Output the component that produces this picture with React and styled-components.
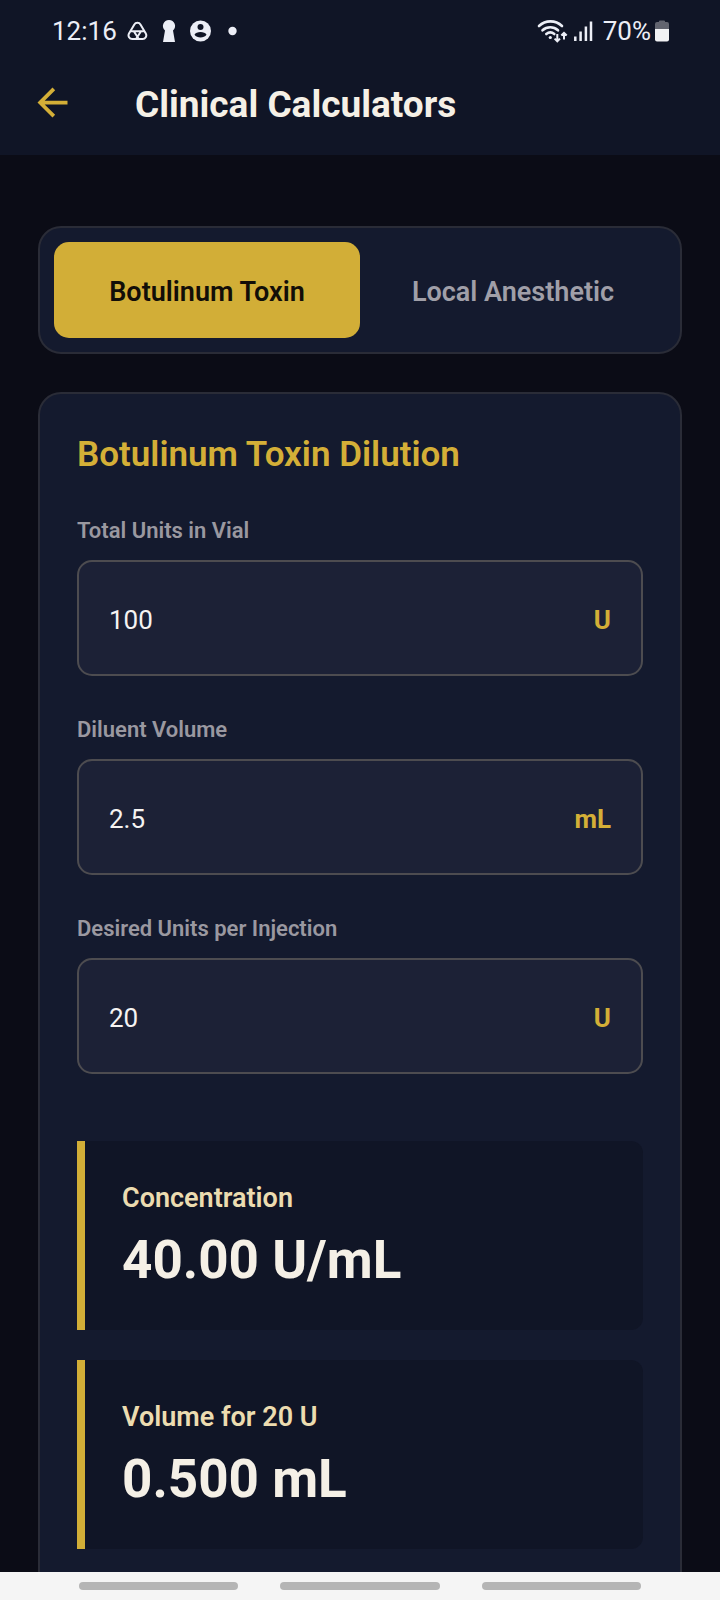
import styled, { createGlobalStyle } from 'styled-components';
import { useState } from 'react';

const GlobalStyle = createGlobalStyle`
* {
box-sizing: border-box;
}
body {
margin: 0;
background: #0b0c16;
font-family: Roboto, "Liberation Sans", sans-serif;
}
button, input {
font-family: inherit;
}
`;

const Screen = styled.div`
display: flex;
flex-direction: column;
height: 100vh;
`;

const Top = styled.header`
background: #101526;
`;

const StatusBar = styled.div`
display: flex;
justify-content: space-between;
align-items: center;
height: 62px;
padding: 0 51px 0 52px;
color: #eceef6;
font-size: 26px;
line-height: 32px;
`;

const StatusGroup = styled.div`
display: flex;
align-items: center;
gap: ${(props) => props.$gap}px;
`;

const TitleBar = styled.div`
display: flex;
align-items: center;
gap: 60px;
height: 93px;
padding: 0 30px 12px;
`;

const BackButton = styled.button`
display: flex;
padding: 0;
border: none;
background: none;
color: #d4af37;
cursor: pointer;
`;

const PageTitle = styled.h1`
margin: 0;
padding-top: 4px;
font-weight: 700;
font-size: 37px;
line-height: 44px;
color: #f5f0e6;
`;

const Content = styled.main`
flex: 1;
min-height: 0;
overflow-y: auto;
scrollbar-width: none;
padding: 71px 38px 38px;
`;

const Tabs = styled.div`
display: flex;
margin-bottom: 38px;
padding: 14px;
background: #141a2e;
border: 2px solid #2a2c37;
border-radius: 23px;
`;

const Tab = styled.button`
flex: 1;
height: 96px;
padding: 4px 0 0;
border: none;
border-radius: 15px;
background: ${(props) => (props.$active ? '#d2ae37' : 'transparent')};
color: ${(props) => (props.$active ? '#120e08' : '#a09fa8')};
font-weight: 600;
font-size: 27px;
line-height: 32px;
cursor: pointer;
`;

const Card = styled.section`
padding: 36px 37px 72px;
background: #141a2e;
border: 2px solid #2a2c37;
border-radius: 23px;
`;

const CardTitle = styled.h2`
margin: 0 0 36px;
font-weight: 600;
font-size: 35px;
line-height: 50px;
color: #d4af37;
`;

const Field = styled.div`
margin-bottom: 39px;
`;

const Label = styled.label`
display: block;
margin-bottom: 14px;
font-weight: 600;
font-size: 22px;
line-height: 30px;
color: #9a98a0;
`;

const InputBox = styled.div`
display: flex;
align-items: center;
height: 116px;
padding: 4px 30px 0;
background: #1c2136;
border: 2px solid #4d4c50;
border-radius: 15px;
`;

const Input = styled.input`
flex: 1;
min-width: 0;
padding: 0;
border: none;
outline: none;
background: none;
font-size: 26px;
line-height: 32px;
color: #f5f3f2;
`;

const Unit = styled.span`
font-weight: 700;
font-size: 26px;
line-height: 32px;
color: #d4af37;
`;

const Results = styled.div`
display: flex;
flex-direction: column;
gap: 30px;
padding-top: 28px;
`;

const Result = styled.div`
height: 189px;
padding: 38px 37px;
background: #101526;
border-left: 8px solid #d2ae37;
border-radius: 0 12px 12px 0;
`;

const ResultLabel = styled.div`
margin-bottom: 8px;
font-weight: 600;
font-size: 27px;
line-height: 38px;
color: #ecdcb0;
`;

const ResultValue = styled.div`
font-weight: 700;
font-size: 53px;
line-height: 70px;
color: #f5f0e6;
`;

const NavBar = styled.nav`
display: flex;
justify-content: center;
gap: 42px;
height: 28px;
padding: 10px 79px;
background: #f5f5f5;
`;

const NavButton = styled.button`
flex: 1;
height: 8px;
padding: 0;
border: none;
border-radius: 4px;
background: #b5b5b5;
`;

const fields = [
    { id: 'total', label: 'Total Units in Vial', unit: 'U' },
    { id: 'volume', label: 'Diluent Volume', unit: 'mL' },
    { id: 'desired', label: 'Desired Units per Injection', unit: 'U' },
];

const NotificationIcons = () => (
    <svg width="112" height="24" viewBox="0 0 112 24" fill="none" aria-hidden="true">
        <g stroke="#eceef6" strokeWidth="2" strokeLinejoin="round" strokeLinecap="round">
            <path d="M7.200 5.700a3.700 3.700 0 0 1 6.400 0l5.200 8.800a3.700 3.700 0 0 1-3.200 5.500H5.200A3.700 3.700 0 0 1 2 14.500z" />
            <path d="M4.500 12.200h9.500l-4.500 7M16.300 12.200h-9.500l4.500 7" />
        </g>
        <path d="M42 1a6 6 0 0 1 4 10.500L48 23H36l2-11.500A6 6 0 0 1 42 1z" fill="#eceef6" />
        <circle cx="73.500" cy="12" r="10.500" fill="#eceef6" />
        <circle cx="73.500" cy="8" r="3" fill="#101526" />
        <path d="M67.500 15.800c1.400-3.600 10.600-3.600 12 0-2.500 3.600-9.500 3.600-12 0z" fill="#101526" />
        <circle cx="105.500" cy="12" r="4.200" fill="#eceef6" />
    </svg>
);

const NetworkIcons = () => (
    <svg width="56" height="24" viewBox="0 0 56 24" fill="none" aria-hidden="true">
        <g stroke="#eceef6" strokeWidth="2.600" strokeLinecap="round">
            <path d="M2 7C8.500.8 18.500.8 25 7" />
            <path d="M5.500 11.300c4.500-4 11-4 15.500 0" />
            <path d="M9.300 15c2.500-2 5.500-2 8 0" />
        </g>
        <circle cx="13.300" cy="18.500" r="1.600" fill="#eceef6" />
        <path d="M20.300 15v7M17.600 19.600l2.700 2.700 2.700-2.700M27 20.500v-6.500M24.300 16.500l2.700-2.700 2.700 2.700" stroke="#eceef6" strokeWidth="2" />
        <path d="M38.300 17.500V22M43.600 12.500V22M48.900 7.500V22M54 2.500V22" stroke="#eceef6" strokeWidth="2.500" />
    </svg>
);

const BatteryIcon = () => (
    <svg width="14" height="22" viewBox="0 0 14 22" aria-hidden="true">
        <path d="M4 2a1 1 0 0 1 1-1.500h4A1 1 0 0 1 10 2h2a2 2 0 0 1 2 2v5H0V4a2 2 0 0 1 2-2z" fill="#62646f" />
        <path d="M0 9h14v10.500a2 2 0 0 1-2 2H2a2 2 0 0 1-2-2z" fill="#f2f2f4" />
    </svg>
);

const App = () => {
    const [tab, setTab] = useState('botox');
    const [values, setValues] = useState({ total: '100', volume: '2.5', desired: '20' });

    const onChange = (e) => {
        setValues({ ...values, [e.target.name]: e.target.value });
    }

    const concentration = Number(values.total) / Number(values.volume) || 0;
    const volume = Number(values.desired) / concentration || 0;

    return (
        <Screen>
            <GlobalStyle />
            <Top>
                <StatusBar>
                    <StatusGroup $gap={10}>
                        <span>12:16</span>
                        <NotificationIcons />
                    </StatusGroup>
                    <StatusGroup $gap={10}>
                        <NetworkIcons />
                        <StatusGroup $gap={4}>
                            <span>70%</span>
                            <BatteryIcon />
                        </StatusGroup>
                    </StatusGroup>
                </StatusBar>
                <TitleBar>
                    <BackButton aria-label="Back">
                        <svg width="45" height="45" viewBox="0 0 24 24" fill="currentColor">
                            <path d="M20 11H7.830l5.590-5.590L12 4l-8 8 8 8 1.410-1.410L7.830 13H20v-2z" />
                        </svg>
                    </BackButton>
                    <PageTitle>Clinical Calculators</PageTitle>
                </TitleBar>
            </Top>
            <Content>
                <Tabs>
                    <Tab $active={tab === 'botox'} onClick={() => setTab('botox')}>Botulinum Toxin</Tab>
                    <Tab $active={tab === 'local'} onClick={() => setTab('local')}>Local Anesthetic</Tab>
                </Tabs>
                <Card>
                    <CardTitle>Botulinum Toxin Dilution</CardTitle>
                    {fields.map((field) => (
                        <Field key={field.id}>
                            <Label htmlFor={field.id}>{field.label}</Label>
                            <InputBox>
                                <Input
                                    id={field.id}
                                    name={field.id}
                                    type="text"
                                    inputMode="decimal"
                                    value={values[field.id]}
                                    onChange={onChange}
                                />
                                <Unit>{field.unit}</Unit>
                            </InputBox>
                        </Field>
                    ))}
                    <Results>
                        <Result>
                            <ResultLabel>Concentration</ResultLabel>
                            <ResultValue>{concentration.toFixed(2)} U/mL</ResultValue>
                        </Result>
                        <Result>
                            <ResultLabel>Volume for {values.desired} U</ResultLabel>
                            <ResultValue>{volume.toFixed(3)} mL</ResultValue>
                        </Result>
                    </Results>
                </Card>
            </Content>
            <NavBar>
                <NavButton aria-label="Recents" />
                <NavButton aria-label="Home" />
                <NavButton aria-label="Navigate back" />
            </NavBar>
        </Screen>
    )
}

export default App
